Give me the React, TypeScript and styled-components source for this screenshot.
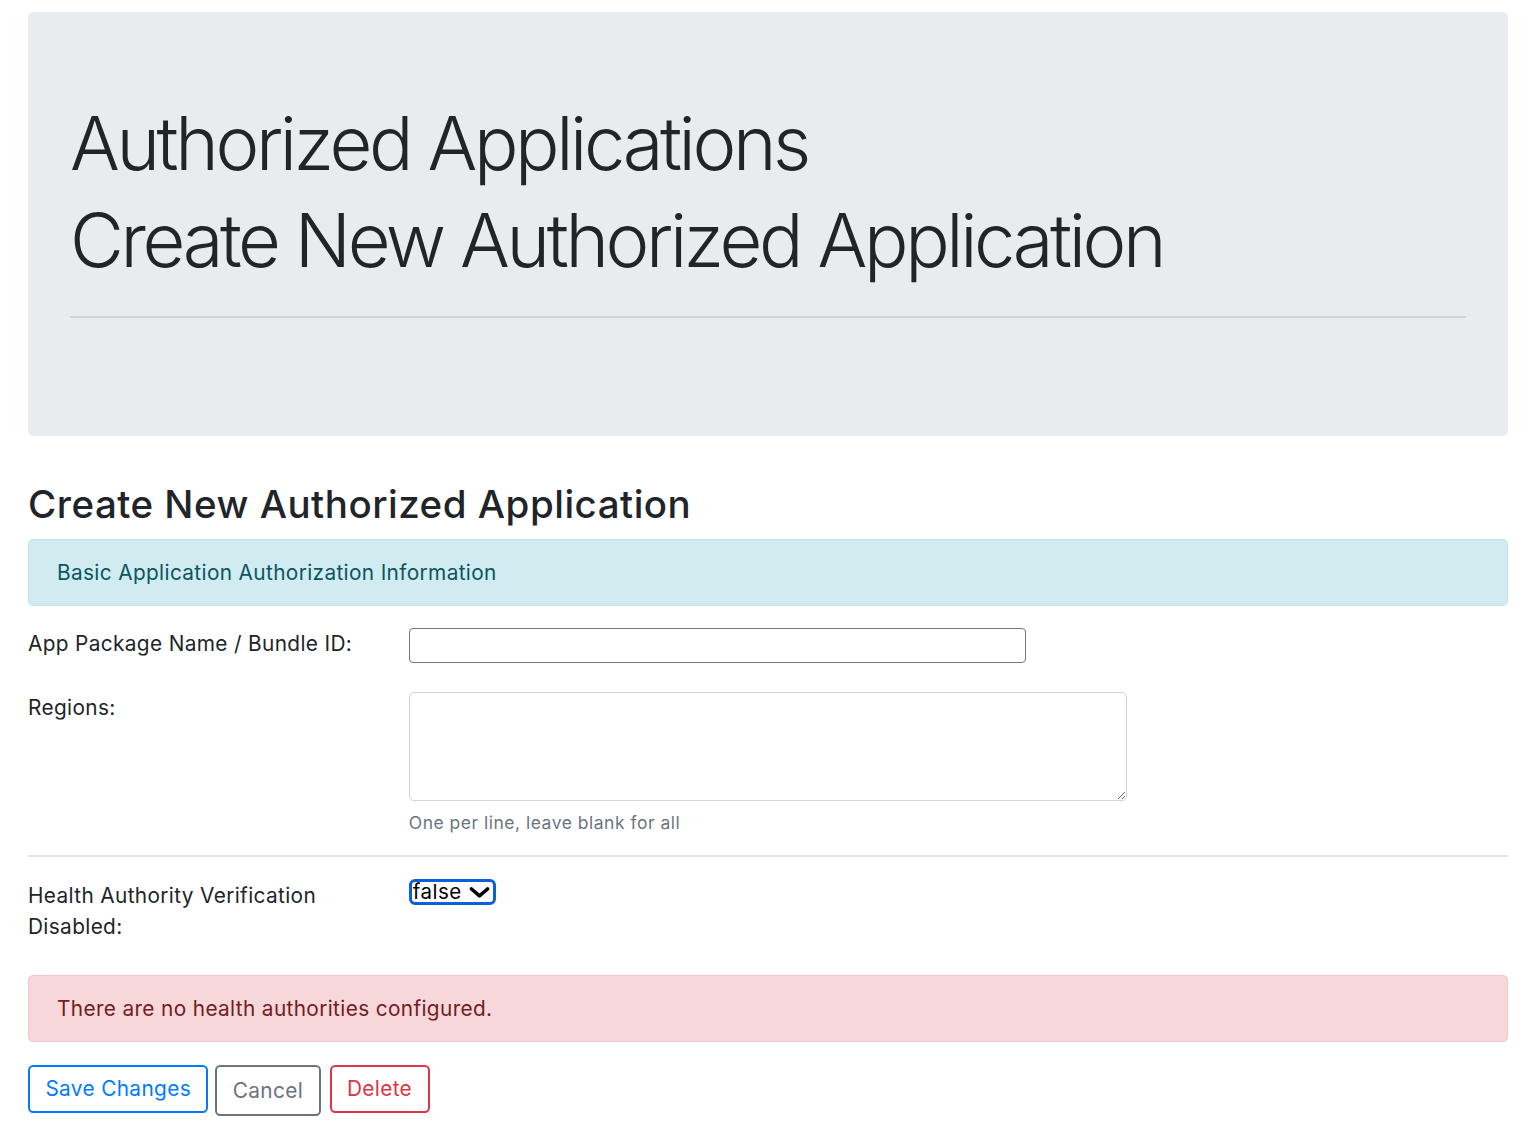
import React from "react";
import styled, { createGlobalStyle } from "styled-components";

const GlobalStyle = createGlobalStyle`
  html, body {
    margin: 0;
    padding: 0;
    background: #ffffff;
  }
  body {
    font-family: Inter, "Noto Sans", "Liberation Sans", sans-serif;
    color: #212529;
    font-size: 20.8px;
    line-height: 31.2px;
    letter-spacing: 0.36px;
  }
  * { box-sizing: border-box; }
`;

const Page = styled.div`
  padding: 12px 30px 28px 28px;
`;

const Jumbotron = styled.header`
  background: #e9ecef;
  border-radius: 6px;
  padding: 87.5px 42px 84px 42px;
`;

const DisplayTitle = styled.h1`
  margin: 0 0 10.4px;
  font-size: 74px;
  font-weight: 300;
  line-height: 87.36px;
  letter-spacing: -3.4px;
  color: #212529;
  &:last-of-type {
    margin-bottom: 0;
  }
`;

const JumboRule = styled.hr`
  margin: 31.4px 0 33.8px;
  border: 0;
  border-top: 2px solid rgba(0, 0, 0, 0.1);
`;

const SectionTitle = styled.h3`
  margin: 47.6px 0 11.7px;
  font-size: 38.5px;
  font-weight: 500;
  line-height: 43.68px;
  letter-spacing: 0.5px;
`;

const Alert = styled.div<{ $variant: "info" | "danger" }>`
  padding: 17px 26px 17px 28px;
  border: 1px solid ${(p) => (p.$variant === "info" ? "#bee5eb" : "#f5c6cb")};
  background: ${(p) => (p.$variant === "info" ? "#d1ecf1" : "#f8d7da")};
  color: ${(p) => (p.$variant === "info" ? "#0c5460" : "#721c24")};
  border-radius: 5px;
  margin-bottom: 22.5px;
`;

const FormRow = styled.div<{ $top?: number; $bottom?: number }>`
  display: grid;
  grid-template-columns: 340.75px 1fr;
  column-gap: 40px;
  align-items: start;
  margin-top: ${(p) => p.$top ?? 0}px;
  margin-bottom: ${(p) => p.$bottom ?? 0}px;
`;

const Label = styled.label`
  display: block;
  line-height: 31.2px;
`;

const Field = styled.div`
  display: flex;
  flex-direction: column;
  align-items: flex-start;
`;

const TextInput = styled.input`
  width: 617px;
  height: 34.3px;
  border: 1.5px solid #767676;
  border-radius: 4px;
  background: #fff;
  font: inherit;
  padding: 0 6px;
  outline: none;
`;

const TextArea = styled.textarea`
  width: 718.5px;
  height: 108.3px;
  border: 1.5px solid #ced4da;
  border-radius: 5px;
  background: #fff;
  font: inherit;
  padding: 7.8px 15.6px;
  resize: vertical;
  outline: none;
`;

const HelpText = styled.small`
  display: block;
  margin-top: 10.5px;
  font-size: 17.5px;
  line-height: 24.96px;
  color: #6c757d;
  letter-spacing: 0.5px;
`;

const Divider = styled.hr`
  margin: 18.8px 0 22.5px;
  border: 0;
  border-top: 2px solid rgba(0, 0, 0, 0.1);
`;

const SelectBox = styled.div`
  display: inline-flex;
  align-items: center;
  height: 26px;
  margin-top: -0.5px;
  padding: 0 3px 0 1px;
  border: 3px solid #0a60d6;
  border-radius: 6px;
  background: #fff;
  gap: 6px;
`;

const NativeSelect = styled.select`
  appearance: none;
  -webkit-appearance: none;
  border: 0;
  background: transparent;
  font-family: Inter, "Liberation Sans", Arial, sans-serif;
  font-size: 20.5px;
  letter-spacing: 0.5px;
  color: #000;
  padding: 0;
  margin: 0;
  line-height: 20px;
  outline: none;
`;

const Chevron = styled.svg`
  width: 21px;
  height: 11px;
  display: block;
`;

const ButtonBar = styled.div`
  display: flex;
  align-items: flex-start;
`;

const tones = {
  primary: "#007bff",
  secondary: "#6c757d",
  danger: "#dc3545",
};

const Button = styled.button<{ $tone: keyof typeof tones; $shift?: number; $gap?: number }>`
  font: inherit;
  font-size: 20.8px;
  line-height: 31.2px;
  letter-spacing: 0.36px;
  background: transparent;
  color: ${(p) => tones[p.$tone]};
  border: 2px solid ${(p) => tones[p.$tone]};
  border-radius: 5.2px;
  padding: ${(p) => 6.75 + (p.$shift ?? 0)}px 15.4px ${(p) => 6.75 + (p.$shift ?? 0) * 0.35}px;
  margin-left: ${(p) => p.$gap ?? 0}px;
  cursor: pointer;
`;

export default function App() {
  return (
    <>
      <GlobalStyle />
      <Page>
        <Jumbotron>
          <DisplayTitle>Authorized Applications</DisplayTitle>
          <DisplayTitle>Create New Authorized Application</DisplayTitle>
          <JumboRule />
        </Jumbotron>

        <SectionTitle>Create New Authorized Application</SectionTitle>
        <Alert $variant="info">Basic Application Authorization Information</Alert>

        <FormRow $bottom={29.7}>
          <Label htmlFor="pkg">App Package Name / Bundle ID:</Label>
          <Field>
            <TextInput id="pkg" type="text" />
          </Field>
        </FormRow>

        <FormRow>
          <Label htmlFor="regions">Regions:</Label>
          <Field>
            <TextArea id="regions" />
            <HelpText>One per line, leave blank for all</HelpText>
          </Field>
        </FormRow>

        <Divider />

        <FormRow $bottom={33}>
          <Label htmlFor="hav">Health Authority Verification Disabled:</Label>
          <Field>
            <SelectBox>
              <NativeSelect id="hav" defaultValue="false">
                <option value="false">false</option>
                <option value="true">true</option>
              </NativeSelect>
              <Chevron viewBox="0 0 21 11">
                <path d="M2.5 2 L10.5 8.8 L18.5 2" fill="none" stroke="#000" strokeWidth="3.6" strokeLinecap="round" strokeLinejoin="round" />
              </Chevron>
            </SelectBox>
          </Field>
        </FormRow>

        <Alert $variant="danger">There are no health authorities configured.</Alert>

        <ButtonBar>
          <Button $tone="primary">Save Changes</Button>
          <Button $tone="secondary" $shift={2} $gap={7}>Cancel</Button>
          <Button $tone="danger" $gap={9}>Delete</Button>
        </ButtonBar>
      </Page>
    </>
  );
}
